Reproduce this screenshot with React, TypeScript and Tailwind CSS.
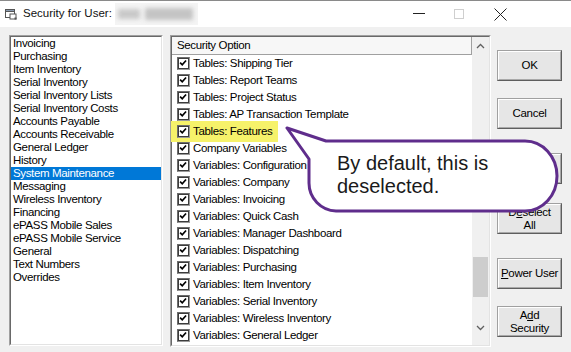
import React from "react";

const leftItems = [
  "Invoicing",
  "Purchasing",
  "Item Inventory",
  "Serial Inventory",
  "Serial Inventory Lists",
  "Serial Inventory Costs",
  "Accounts Payable",
  "Accounts Receivable",
  "General Ledger",
  "History",
  "System Maintenance",
  "Messaging",
  "Wireless Inventory",
  "Financing",
  "ePASS Mobile Sales",
  "ePASS Mobile Service",
  "General",
  "Text Numbers",
  "Overrides",
];

const options = [
  "Tables: Shipping Tier",
  "Tables: Report Teams",
  "Tables: Project Status",
  "Tables: AP Transaction Template",
  "Tables: Features",
  "Company Variables",
  "Variables: Configuration",
  "Variables: Company",
  "Variables: Invoicing",
  "Variables: Quick Cash",
  "Variables: Manager Dashboard",
  "Variables: Dispatching",
  "Variables: Purchasing",
  "Variables: Item Inventory",
  "Variables: Serial Inventory",
  "Variables: Wireless Inventory",
  "Variables: General Ledger",
];

function Check() {
  return (
    <div className="relative w-[13px] h-[13px] shrink-0 border border-t-[#6d6d6d] border-l-[#6d6d6d] border-b-[#9a9a9a] border-r-[#9a9a9a] bg-white">
      <div className="absolute inset-0 border border-[#3c3c3c]" />
      <svg viewBox="0 0 13 13" className="absolute inset-0 w-[11px] h-[11px]">
        <path d="M2.5 5.5 L5 8 L9.5 3" fill="none" stroke="#000" strokeWidth="2" />
      </svg>
    </div>
  );
}

function Btn({ children, className = "" }: { children: React.ReactNode; className?: string }) {
  return (
    <div
      className={`w-[65px] h-[31px] border border-t-[#a0a0a0] border-l-[#a0a0a0] border-b-[#5e5e5e] border-r-[#5e5e5e] bg-[#e6e6e6] ${className}`}
    >
      <div className="w-full h-full border border-t-white border-l-white border-b-[#a8a8a8] border-r-[#a8a8a8] flex flex-col items-center justify-center text-center leading-[13px] text-black">
        {children}
      </div>
    </div>
  );
}

export default function App() {
  return (
    <div
      className="relative w-[571px] h-[352px] overflow-hidden bg-[#f0f0f0] text-black"
      style={{ fontFamily: '"Liberation Sans", Arial, sans-serif' }}
    >
      {/* title bar */}
      <div className="h-[27px] bg-white border-t border-[#8a8a8a] flex items-center relative">
        <svg viewBox="0 0 14 14" className="ml-[4px] w-[14px] h-[14px]">
          <rect x="1.5" y="2.5" width="9" height="8" fill="#fff" stroke="#555" />
          <rect x="1.5" y="2.5" width="9" height="2" fill="#8a9bb0" stroke="#555" />
          <rect x="6" y="7" width="6" height="5" fill="#fff" stroke="#555" />
          <rect x="10.5" y="10.5" width="2" height="2" fill="#555" />
        </svg>
        <span className="ml-[5px] text-[11.5px] text-[#111]">Security for User:</span>
        <div className="ml-[3px] w-[83px] h-[22px] relative overflow-hidden bg-[#f4f4f4]">
          <div className="absolute left-[3px] top-[6px] w-[22px] h-[10px] bg-[#c9c9c9] blur-[2px]" />
          <div className="absolute left-[30px] top-[5px] w-[48px] h-[12px] bg-[#c4c4c4] blur-[2px]" />
        </div>
        <div className="absolute left-[413px] top-[12px] w-[12px] h-[1px] bg-[#222]" />
        <div className="absolute left-[454px] top-[8px] w-[10px] h-[10px] border border-[#cfcfcf]" />
        <svg viewBox="0 0 13 13" className="absolute left-[494px] top-[7px] w-[13px] h-[13px]">
          <path d="M0.5 0.5 L12.5 12.5 M12.5 0.5 L0.5 12.5" stroke="#222" strokeWidth="1" />
        </svg>
      </div>

      {/* body */}
      <div className="flex pt-[8px] pl-[9px]">
        {/* left list */}
        <div className="w-[154px] h-[311px] border border-t-[#a0a0a0] border-l-[#a0a0a0] border-b-white border-r-white">
          <div className="w-full h-full border border-t-[#696969] border-l-[#696969] border-b-[#e3e3e3] border-r-[#e3e3e3] bg-white text-[11.5px] tracking-[-0.35px] leading-[13px]">
            {leftItems.map((it) => (
              <div
                key={it}
                className={`h-[13px] pl-[2px] whitespace-nowrap ${
                  it === "System Maintenance" ? "bg-[#0078d7] text-white" : ""
                }`}
              >
                {it}
              </div>
            ))}
          </div>
        </div>

        {/* right list */}
        <div className="ml-[7px] w-[321px] h-[312px] border border-t-[#a0a0a0] border-l-[#a0a0a0] border-b-white border-r-white">
          <div className="w-full h-full border border-t-[#696969] border-l-[#696969] border-b-[#e3e3e3] border-r-[#e3e3e3] bg-white flex text-[11.5px] tracking-[-0.35px]">
            <div className="flex-1 flex flex-col">
              <div className="h-[18px] bg-[#f7f7f7] border-b border-b-[#a0a0a0] border-r border-r-[#a0a0a0] pl-[5px] leading-[17px]">
                Security Option
              </div>
              {options.map((o) => (
                <div key={o} className="relative h-[17px] flex items-center pl-[5px] whitespace-nowrap">
                  {o === "Tables: Features" && (
                    <div className="absolute left-[-1px] top-[-2px] w-[107px] h-[21px] bg-[#f6f26a]" />
                  )}
                  <div className="relative flex items-center">
                    <Check />
                    <span className="ml-[3px] leading-[13px]">{o}</span>
                  </div>
                </div>
              ))}
            </div>
            {/* scrollbar */}
            <div className="w-[17px] bg-[#f0f0f0] flex flex-col items-center">
              <svg viewBox="0 0 9 6" className="mt-[6px] w-[9px] h-[6px]">
                <path d="M1 5 L4.5 1.5 L8 5" fill="none" stroke="#606060" strokeWidth="1.3" />
              </svg>
              <div className="mt-[208px] w-[15px] h-[40px] bg-[#cdcdcd]" />
              <svg viewBox="0 0 9 6" className="mt-[28px] w-[9px] h-[6px]">
                <path d="M1 1 L4.5 4.5 L8 1" fill="none" stroke="#606060" strokeWidth="1.3" />
              </svg>
            </div>
          </div>
        </div>

        {/* buttons */}
        <div className="ml-[6px] flex flex-col text-[11.5px] tracking-[-0.3px]">
          <Btn className="mt-[15px]">OK</Btn>
          <Btn className="mt-[17px]">Cancel</Btn>
          <Btn className="mt-[24px]">
            <span>Select All</span>
          </Btn>
          <Btn className="mt-[19px]">
            <span>
              D<span className="underline">e</span>select
            </span>
            <span>All</span>
          </Btn>
          <Btn className="mt-[24px]">
            <span>
              <span className="underline">P</span>ower User
            </span>
          </Btn>
          <Btn className="mt-[17px]">
            <span>
              A<span className="underline">d</span>d
            </span>
            <span>Security</span>
          </Btn>
        </div>
      </div>

      {/* callout */}
      <svg className="absolute left-0 top-0 w-[571px] h-[352px] pointer-events-none" viewBox="0 0 571 352">
        <path
          d="M287 128 L326 141 H525 A32 35 0 0 1 557 176 A32 35 0 0 1 525 211 H336 A28 28 0 0 1 309 183 V159 Z"
          fill="#fff"
          stroke="#5f2d8c"
          strokeWidth="3"
          strokeLinejoin="round"
        />
      </svg>
      <div className="absolute left-[337px] top-[152px] text-[20px] leading-[23px] text-[#1a1a1a] whitespace-nowrap">
        <div>By default, this is</div>
        <div>deselected.</div>
      </div>
    </div>
  );
}
